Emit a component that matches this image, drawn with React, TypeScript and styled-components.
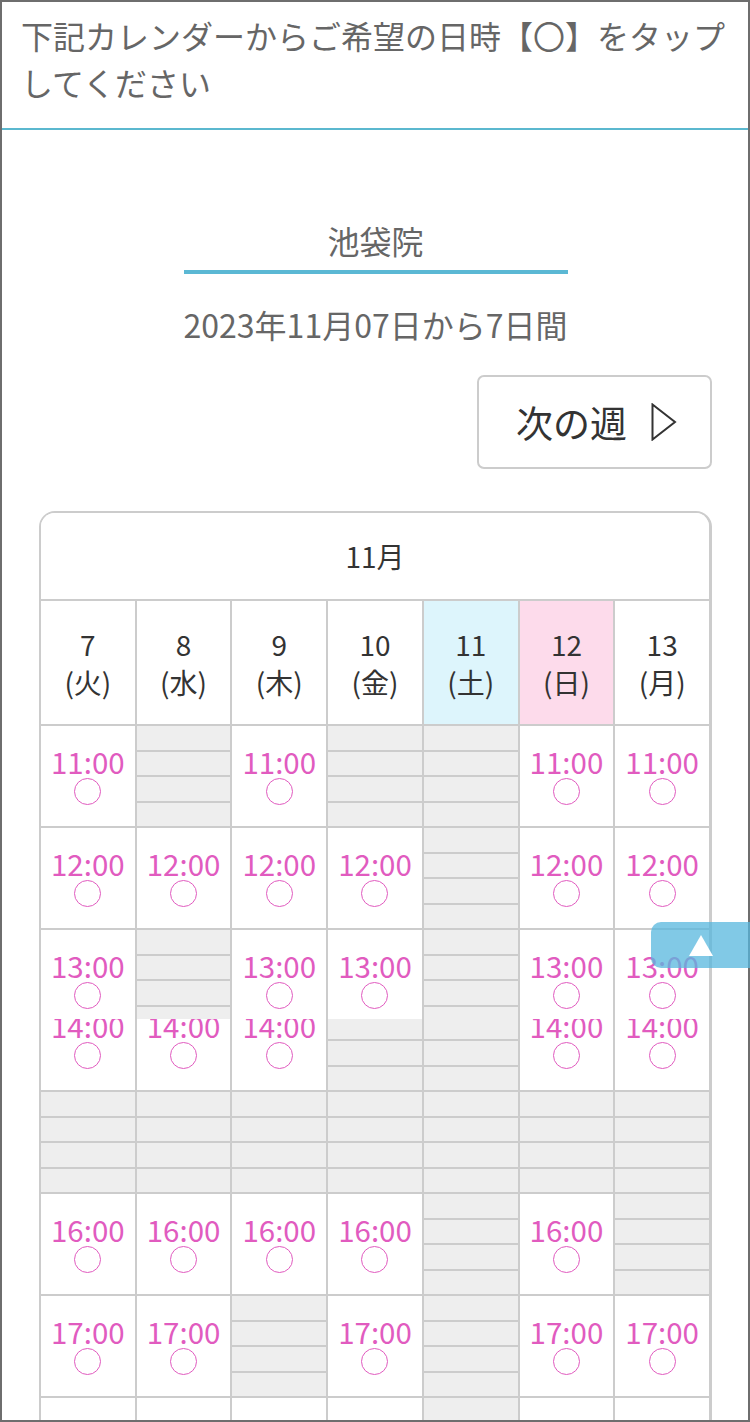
import React from 'react';
import styled, { createGlobalStyle } from 'styled-components';

const GlobalStyle = createGlobalStyle`
  html, body {
    margin: 0;
    padding: 0;
    background: #fff;
  }
  body {
    font-family: "Noto Sans CJK JP", "Noto Sans", sans-serif;
  }
`;

const Frame = styled.div`
  width: 750px;
  height: 1422px;
  box-sizing: border-box;
  border: 2px solid #6e6e6e;
  overflow: hidden;
  background: #fff;
`;

const Notice = styled.header`
  padding: 10px 18px 22px 19px;
  border-bottom: 2px solid #5bb8cf;
  font-size: 32px;
  line-height: 47px;
  color: #666;
`;

const Main = styled.main`
  display: flex;
  flex-direction: column;
  padding: 0 36px 0 37px;
`;

const Branch = styled.h2`
  align-self: center;
  width: 384px;
  margin: 87px 0 0;
  padding-bottom: 7px;
  border-bottom: 4px solid #5bb8d4;
  text-align: center;
  font-size: 32px;
  font-weight: 400;
  line-height: 46px;
  color: #666;
`;

const Period = styled.p`
  margin: 28px 0 0;
  text-align: center;
  font-size: 32px;
  line-height: 44px;
  color: #666;
`;

const NextWeek = styled.button`
  align-self: flex-end;
  display: flex;
  align-items: center;
  justify-content: center;
  gap: 24px;
  width: 235px;
  height: 94px;
  margin-top: 29px;
  padding: 0 0 0 4px;
  border: 2px solid #ccc;
  border-radius: 7px;
  background: #fff;
  font-family: inherit;
  font-size: 37px;
  color: #333;
`;

const Calendar = styled.section`
  margin-top: 42px;
  border: 2px solid #ccc;
  border-right-width: 3px;
  border-bottom: none;
  border-radius: 16px 16px 0 0;
  overflow: hidden;
`;

const MonthBar = styled.div`
  height: 86px;
  display: flex;
  align-items: center;
  justify-content: center;
  border-bottom: 2px solid #ccc;
  background: #fff;
  font-size: 28px;
  color: #333;
`;

const Grid = styled.div`
  display: grid;
  grid-template-columns: repeat(7, 1fr);
  grid-template-rows: 123px 100px 100px 160px 100px 100px 100px 100px;
  gap: 2px;
  background: #ccc;
`;

type DayKind = 'weekday' | 'sat' | 'sun';

const dayBg: Record<DayKind, string> = {
  weekday: '#fff',
  sat: '#ddf5fc',
  sun: '#fddbeb',
};

const DayHead = styled.div<{ $kind: DayKind }>`
  display: flex;
  flex-direction: column;
  align-items: center;
  justify-content: center;
  background: ${p => dayBg[p.$kind]};
  font-size: 28px;
  line-height: 38px;
  color: #333;
`;

const OpenSlot = styled.div`
  flex-shrink: 0;
  height: 100px;
  display: flex;
  flex-direction: column;
  align-items: center;
  background: #fff;
`;

const Time = styled.span`
  padding-top: 21px;
  font-size: 29.5px;
  line-height: 28px;
  color: #e15bbf;
`;

const Mark = styled.span`
  box-sizing: border-box;
  width: 27px;
  height: 27px;
  margin-top: 3px;
  border: 1.5px solid #e15bbf;
  border-radius: 50%;
`;

const ClosedSlot = styled.div`
  flex-shrink: 0;
  height: 100px;
  display: flex;
  flex-direction: column;
  gap: 2px;
  background: #ccc;
`;

const Stripe = styled.div`
  flex: 1;
  background: #eee;
`;

const SplitCell = styled.div`
  display: flex;
  flex-direction: column;
`;

const UpperPart = styled.div`
  height: 89px;
  overflow: hidden;
`;

const LowerPart = styled.div`
  height: 71px;
  overflow: hidden;
  display: flex;
  flex-direction: column;
  justify-content: flex-end;
`;

const PageTop = styled.button`
  position: fixed;
  top: 922px;
  right: 0;
  width: 99px;
  height: 46px;
  padding: 0;
  border: none;
  border-radius: 10px 0 0 10px;
  background: rgba(87, 183, 222, 0.75);
  display: flex;
  align-items: center;
  justify-content: center;
`;

const hours = ['11:00', '12:00', '13:00', '14:00', '15:00', '16:00', '17:00', '18:00'];

const days: { date: string; week: string; kind: DayKind; open: number[] }[] = [
  { date: '7', week: '火', kind: 'weekday', open: [1, 1, 1, 1, 0, 1, 1, 1] },
  { date: '8', week: '水', kind: 'weekday', open: [0, 1, 0, 1, 0, 1, 1, 1] },
  { date: '9', week: '木', kind: 'weekday', open: [1, 1, 1, 1, 0, 1, 0, 1] },
  { date: '10', week: '金', kind: 'weekday', open: [0, 1, 1, 0, 0, 1, 1, 1] },
  { date: '11', week: '土', kind: 'sat', open: [0, 0, 0, 0, 0, 0, 0, 0] },
  { date: '12', week: '日', kind: 'sun', open: [1, 1, 1, 1, 0, 1, 1, 1] },
  { date: '13', week: '月', kind: 'weekday', open: [1, 1, 1, 1, 0, 0, 1, 1] },
];

const Slot = ({ open, time }: { open: boolean; time: string }) =>
  open ? (
    <OpenSlot>
      <Time>{time}</Time>
      <Mark />
    </OpenSlot>
  ) : (
    <ClosedSlot>
      <Stripe />
      <Stripe />
      <Stripe />
      <Stripe />
    </ClosedSlot>
  );

export default function App() {
  const cells: React.ReactNode[] = [];

  days.forEach(d => {
    cells.push(
      <DayHead key={'h' + d.date} $kind={d.kind}>
        <span>{d.date}</span>
        <span>({d.week})</span>
      </DayHead>
    );
  });

  // 11:00, 12:00
  [0, 1].forEach(h => {
    days.forEach(d => {
      cells.push(<Slot key={h + d.date} open={!!d.open[h]} time={hours[h]} />);
    });
  });

  // 13:00 and 14:00 overlap in the capture
  days.forEach(d => {
    cells.push(
      <SplitCell key={'s' + d.date}>
        <UpperPart>
          <Slot open={!!d.open[2]} time={hours[2]} />
        </UpperPart>
        <LowerPart>
          <Slot open={!!d.open[3]} time={hours[3]} />
        </LowerPart>
      </SplitCell>
    );
  });

  [4, 5, 6, 7].forEach(h => {
    days.forEach(d => {
      cells.push(<Slot key={h + d.date} open={!!d.open[h]} time={hours[h]} />);
    });
  });

  return (
    <>
      <GlobalStyle />
      <Frame>
        <Notice>下記カレンダーからご希望の日時【〇】をタップしてください</Notice>
        <Main>
          <Branch>池袋院</Branch>
          <Period>2023年11月07日から7日間</Period>
          <NextWeek>
            <span>次の週</span>
            <svg width="26" height="38" viewBox="0 0 26 38">
              <polygon points="1.5,1.5 24,19 1.5,36.5" fill="none" stroke="#333" strokeWidth="2" />
            </svg>
          </NextWeek>
          <Calendar>
            <MonthBar>11月</MonthBar>
            <Grid>{cells}</Grid>
          </Calendar>
        </Main>
        <PageTop aria-label="ページトップへ">
          <svg width="24" height="21" viewBox="0 0 24 21">
            <polygon points="12,0 24,21 0,21" fill="#fff" />
          </svg>
        </PageTop>
      </Frame>
    </>
  );
}
